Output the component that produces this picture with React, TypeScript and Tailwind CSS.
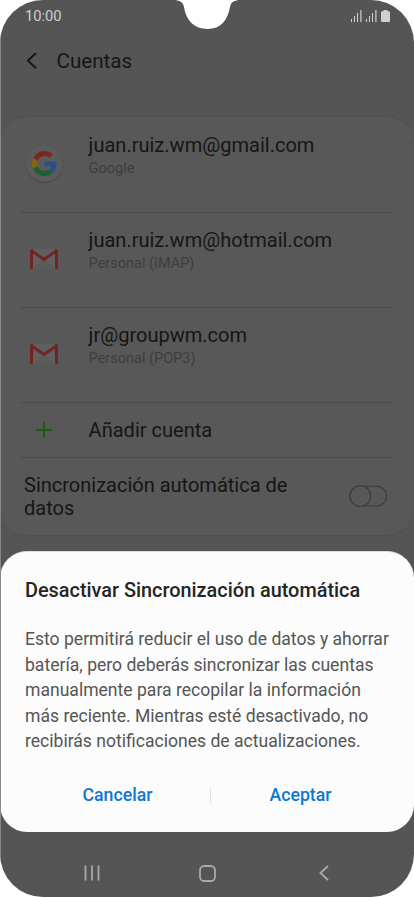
import React from "react";
import clsx from "clsx";

interface Account {
  name: string;
  type: string;
  provider: "google" | "gmail";
}

const accounts: Account[] = [
  { name: "juan.ruiz.wm@gmail.com", type: "Google", provider: "google" },
  {
    name: "juan.ruiz.wm@hotmail.com",
    type: "Personal (IMAP)",
    provider: "gmail",
  },
  { name: "jr@groupwm.com", type: "Personal (POP3)", provider: "gmail" },
];

const GoogleIcon = () => (
  <div className="flex h-[37px] w-[37px] items-center justify-center rounded-full bg-[#5b5b5b] shadow-[0_1px_1px_#484848]">
    <svg width="25" height="25" viewBox="0 0 48 48">
      <path
        fill="#7a2820"
        d="M24 9.5c3.54 0 6.71 1.22 9.21 3.6l6.85-6.85C35.9 2.38 30.47 0 24 0 14.62 0 6.51 5.38 2.56 13.22l7.98 6.19C12.43 13.72 17.74 9.5 24 9.5z"
      />
      <path
        fill="#264f92"
        d="M46.98 24.55c0-1.57-.15-3.09-.38-4.55H24v9.02h12.94c-.58 2.96-2.26 5.48-4.78 7.18l7.73 6c4.51-4.18 7.09-10.36 7.09-17.65z"
      />
      <path
        fill="#866408"
        d="M10.53 28.59c-.48-1.45-.76-2.99-.76-4.59s.27-3.14.76-4.59l-7.98-6.19C.92 16.46 0 20.12 0 24c0 3.88.92 7.54 2.56 10.78l7.97-6.19z"
      />
      <path
        fill="#1c602f"
        d="M24 48c6.48 0 11.93-2.13 15.89-5.81l-7.73-6c-2.15 1.45-4.92 2.3-8.16 2.3-6.26 0-11.57-4.22-13.47-9.91l-7.98 6.19C6.51 42.62 14.62 48 24 48z"
      />
    </svg>
  </div>
);

const GmailIcon = () => (
  <svg width="28" height="20" viewBox="0 0 28 20">
    <path fill="#606060" d="M1 0h26v20H1z" />
    <path fill="#565656" d="M3 20 14 10l11 10z" opacity=".6" />
    <path fill="#742420" d="M0 2Q0 0 2 0L3 .5V20H1.2Q0 20 0 19z" />
    <path fill="#742420" d="M28 2Q28 0 26 0L25 .5V20h1.8Q28 20 28 19z" />
    <path d="M1.5 1.7 14 10.5 26.5 1.7" fill="none" stroke="#742420" strokeWidth="3" />
  </svg>
);

const SignalIcon = () => (
  <svg width="11" height="12" viewBox="0 0 11 12" fill="#d0d0d0">
    <path d="M0 9h1v3H0zM3 6h1v6H3zM6 3h1v9H6zM9.3 0h1.2v12H9.3z" />
  </svg>
);

const StatusBar = () => (
  <div className="flex h-8 items-center justify-between pr-6 pl-[25px]">
    <span className="mt-px text-[14.7px] text-[#d0d0d0]">10:00</span>
    <div className="flex items-center gap-1">
      <SignalIcon />
      <SignalIcon />
      <svg width="9" height="12" viewBox="0 0 9 12" fill="#d0d0d0">
        <path d="M2.5 0h4v1.2h1.5q1 0 1 1V11q0 1-1 1H1q-1 0-1-1V2.2q0-1 1-1h1.5z" />
      </svg>
    </div>
  </div>
);

const AccountRow = ({ account }: { account: Account }) => (
  <div className="flex h-[95px]">
    <div
      className={clsx(
        "flex w-[88px] justify-center",
        account.provider === "google" ? "pt-[28px]" : "pt-[37px]"
      )}
    >
      {account.provider === "google" ? <GoogleIcon /> : <GmailIcon />}
    </div>
    <div className="pt-4 pl-[0.6px]">
      <p className="text-[20.05px] leading-6 text-[#151515]">{account.name}</p>
      <p className="mt-px text-[14.5px] leading-[22px] text-[#3e3e3e]">
        {account.type}
      </p>
    </div>
  </div>
);

const Divider = () => <div className="mx-5 -mb-px h-px bg-[#4d4d4d]" />;

const Dialog = () => (
  <div className="absolute inset-x-0 top-[551px] h-[281px] rounded-[27px] border-t border-[#dedede] bg-[#fcfcfc] px-[25px] pt-[26px]">
    <h2 className="text-[19.87px] leading-[26px] font-medium whitespace-nowrap text-[#252525]">
      Desactivar Sincronización automática
    </h2>
    <p className="mt-[23.4px] text-[17.57px] leading-[25.4px] whitespace-nowrap text-[#555]">
      Esto permitirá reducir el uso de datos y ahorrar
      <br />
      batería, pero deberás sincronizar las cuentas
      <br />
      manualmente para recopilar la información
      <br />
      más reciente. Mientras esté desactivado, no
      <br />
      recibirás notificaciones de actualizaciones.
    </p>
    <div className="mt-[28.6px] flex h-6 items-center text-[17.7px] font-medium text-[#0d78d3]">
      <button className="w-[185px] shrink-0">Cancelar</button>
      <span className="h-4 w-px shrink-0 bg-[#e5e5e5]" />
      <button className="w-[179px] shrink-0">Aceptar</button>
    </div>
  </div>
);

const NavigationBar = () => (
  <div className="absolute inset-x-0 bottom-0 flex h-12 items-center pl-[84px]">
    <svg width="16" height="16" viewBox="0 0 16 16" stroke="#aaa" strokeWidth="1.8">
      <path d="M1.5 .5v15M8 .5v15M14.5 .5v15" />
    </svg>
    <svg className="ml-[99px]" width="17" height="17" viewBox="0 0 17 17" fill="none" stroke="#aaa" strokeWidth="1.8">
      <rect x="1" y="1" width="15" height="15" rx="4.3" />
    </svg>
    <svg className="ml-[100px]" width="16" height="16" viewBox="0 0 16 16" fill="none" stroke="#aaa" strokeWidth="1.8">
      <path d="M12 1 4.5 8l7.5 7" />
    </svg>
  </div>
);

export default function App() {
  return (
    <div className="h-[897px] w-[414px] bg-white font-[Roboto,sans-serif]">
      <div className="relative h-full overflow-hidden rounded-[43px] bg-[#555]">
        <svg className="absolute top-0 left-[173px]" width="70" height="30" viewBox="0 0 70 30">
          <path
            fill="#fff"
            d="M0 0C7 0 10 2 11 7C13 20 21 29 34.5 29S54.5 20 57 7C58 2 61 0 68 0z"
          />
        </svg>
        <StatusBar />
        <div className="flex h-[58px] items-center pl-[26px]">
          <svg width="11" height="17" viewBox="0 0 11 17" fill="none" stroke="#151515" strokeWidth="1.9">
            <path d="M10 0 2 7.6l8 7.7" />
          </svg>
          <h1 className="ml-[19.5px] text-[20.6px] text-[#151515]">Cuentas</h1>
        </div>
        <div className="mt-[26px] h-[420px] rounded-[26px] border-y border-[#505050] bg-[#585858]">
          {accounts.map((account) => (
            <React.Fragment key={account.name}>
              <AccountRow account={account} />
              <Divider />
            </React.Fragment>
          ))}
          <div className="flex h-[55px] items-center">
            <div className="flex w-[88px] justify-center">
              <svg width="16" height="16" viewBox="0 0 16 16" stroke="#1e5c12" strokeWidth="2">
                <path d="M8 0v16M0 8h16" />
              </svg>
            </div>
            <span className="pt-0.5 pl-[0.6px] text-[20.05px] text-[#151515]">
              Añadir cuenta
            </span>
          </div>
          <Divider />
          <div className="flex h-[77px] items-center justify-between pr-[26px] pl-6">
            <p className="pt-[3px] text-[20px] leading-[23.5px] text-[#151515]">
              Sincronización automática de
              <br />
              datos
            </p>
            <svg width="40" height="22" viewBox="0 0 40 22" fill="#585858" stroke="#3c3c3c" strokeWidth="1.1">
              <rect x="2" y="1.2" width="36.5" height="19.8" rx="9.9" />
              <circle cx="12.3" cy="11.1" r="10.4" />
            </svg>
          </div>
        </div>
        <Dialog />
        <NavigationBar />
        <div className="absolute inset-y-10 left-0 w-px bg-[#888]" />
      </div>
    </div>
  );
}
